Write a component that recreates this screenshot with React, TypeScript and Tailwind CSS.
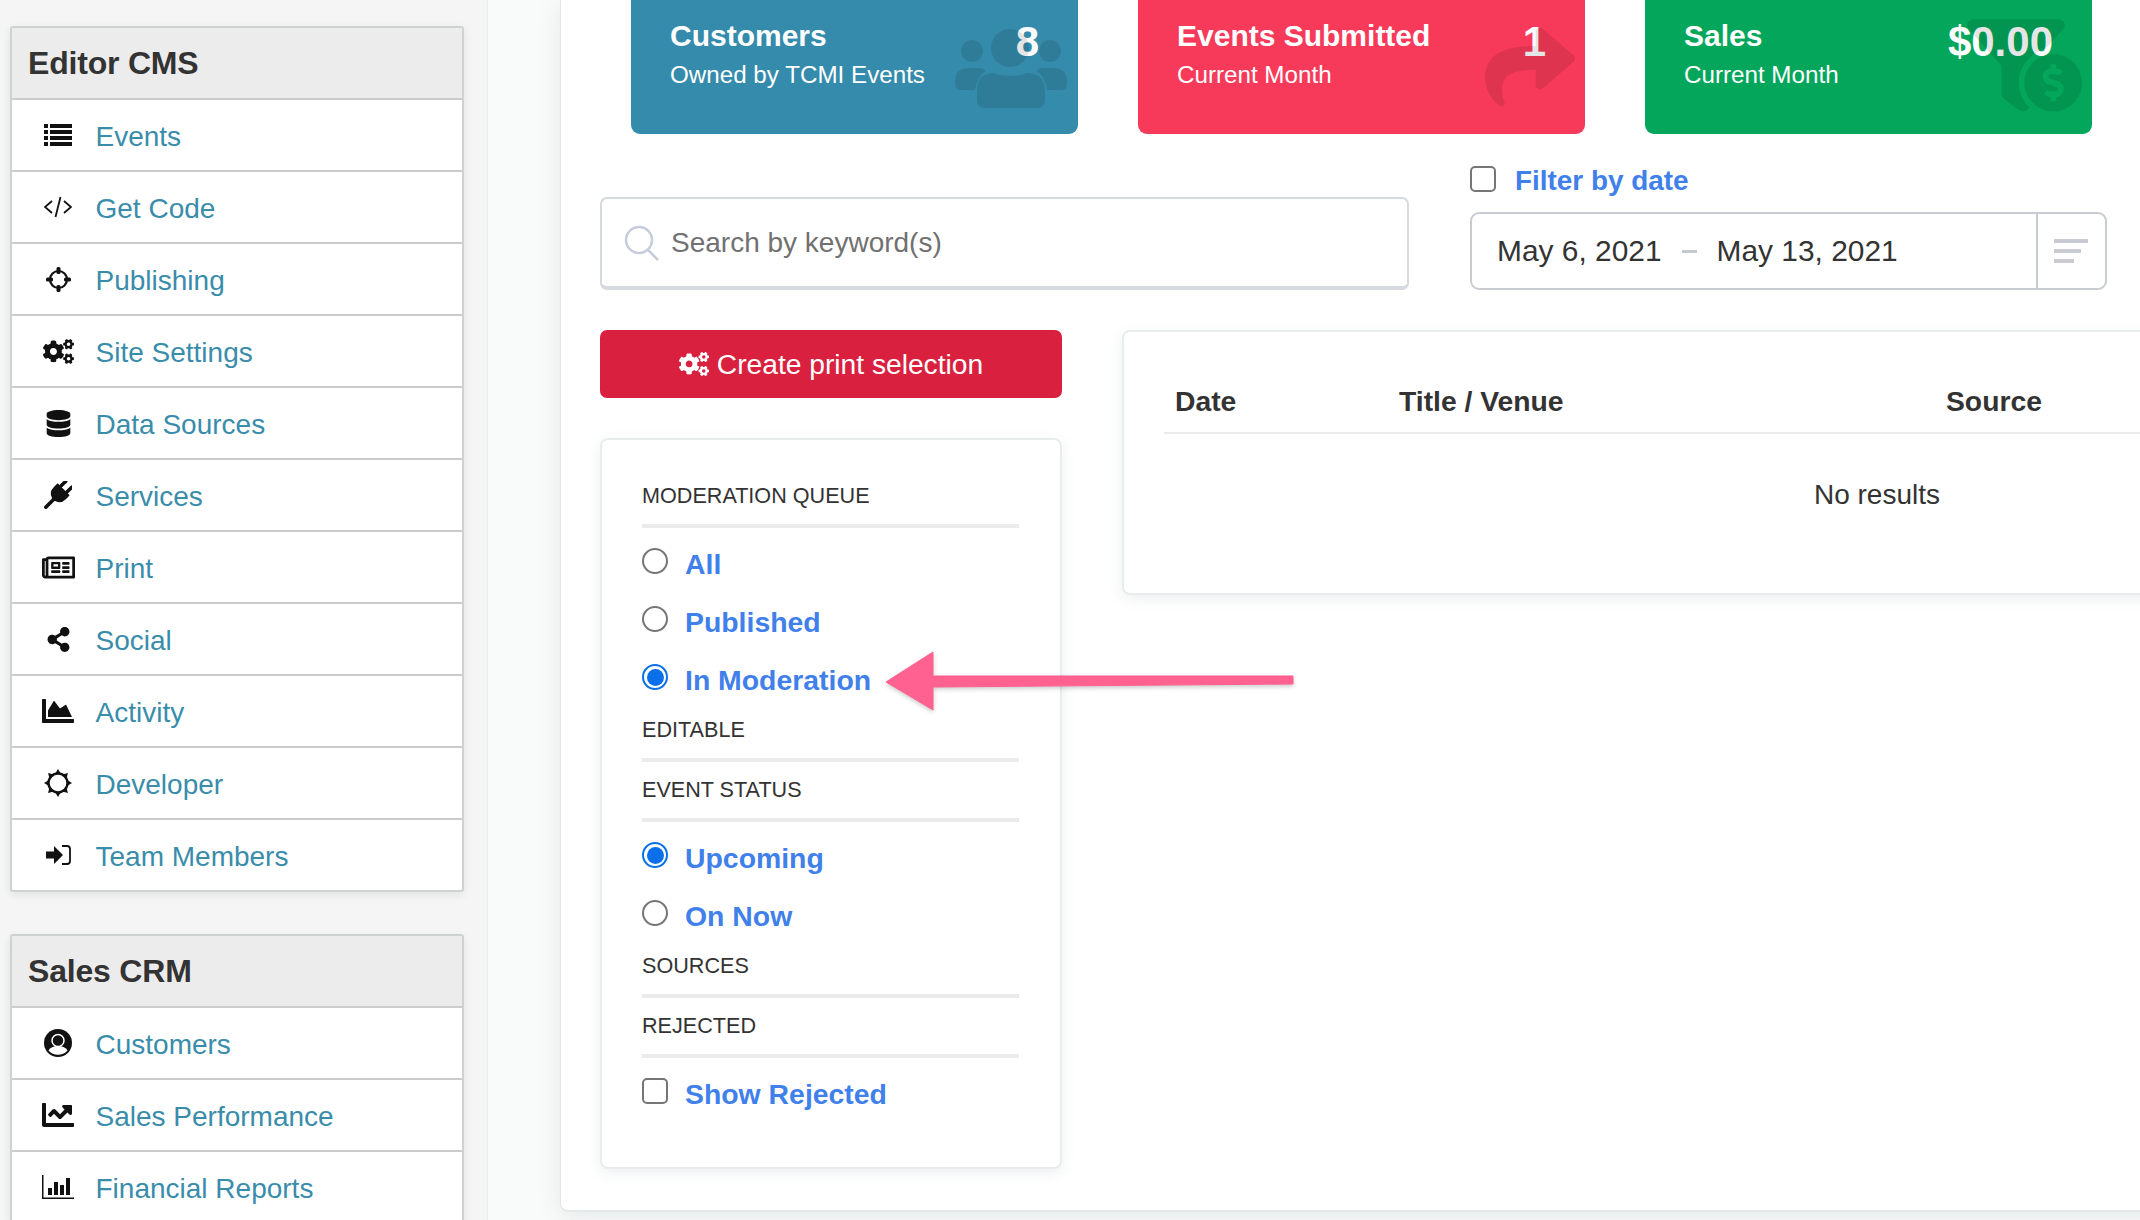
import React from 'react';
import {
  FaCogs,
  FaDatabase,
  FaRegNewspaper,
  FaShareAlt,
  FaChartArea,
  FaChartLine,
  FaShare,
  FaFunnelDollar,
} from 'react-icons/fa';

const ListIcon = () => (
  <svg width="28" height="22" viewBox="0 0 28 22" fill="#111">
    <rect x="0" y="0" width="4" height="4" />
    <rect x="6" y="0" width="22" height="4" />
    <rect x="0" y="6" width="4" height="4" />
    <rect x="6" y="6" width="22" height="4" />
    <rect x="0" y="12" width="4" height="4" />
    <rect x="6" y="12" width="22" height="4" />
    <rect x="0" y="18" width="4" height="4" />
    <rect x="6" y="18" width="22" height="4" />
  </svg>
);

const CodeIcon = () => (
  <svg width="28" height="22" viewBox="0 0 28 22" fill="none" stroke="#111" strokeWidth="1.8">
    <path d="M8 5 L1 11 L8 17" />
    <path d="M20 5 L27 11 L20 17" />
    <path d="M16.5 1 L11.5 21" />
  </svg>
);

const TargetIcon = () => (
  <svg width="25" height="25" viewBox="0 0 25 25" fill="#111">
    <circle cx="12.5" cy="12.5" r="8.500" fill="none" stroke="#111" strokeWidth="2.200" />
    <rect x="10.500" y="0" width="4" height="7" rx="1.500" />
    <rect x="10.500" y="18" width="4" height="7" rx="1.500" />
    <rect x="0" y="10.500" width="7" height="4" rx="1.500" />
    <rect x="18" y="10.500" width="7" height="4" rx="1.500" />
  </svg>
);

const PlugIcon = () => (
  <svg width="28" height="28" viewBox="0 0 28 28" fill="#111">
    <g transform="rotate(45 14 14)">
      <rect x="8" y="-3" width="3.500" height="10" rx="1.700" />
      <rect x="16.500" y="-3" width="3.500" height="10" rx="1.700" />
      <path d="M5.500 6 H22.500 V11 Q22.500 19 15.800 20.500 V21 H12.200 V20.500 Q5.500 19 5.500 11 Z" />
      <rect x="12.200" y="20" width="3.600" height="13" />
    </g>
  </svg>
);

const SunIcon = () => (
  <svg width="28" height="28" viewBox="0 0 28 28" fill="#111">
    <circle cx="14" cy="14" r="9.500" fill="none" stroke="#111" strokeWidth="2.400" />
    {[0, 45, 90, 135, 180, 225, 270, 315].map((a) => (
      <path key={a} d="M14 0 L17 5 H11 Z" transform={`rotate(${a} 14 14)`} />
    ))}
  </svg>
);

const SignInIcon = () => (
  <svg width="25" height="20" viewBox="0 0 25 20" fill="#111">
    <path d="M0 6.5 H8 V1 L17 10 L8 19 V13.500 H0 Z" />
    <path d="M16 1 H21 Q24 1 24 4 V16 Q24 19 21 19 H16" fill="none" stroke="#111" strokeWidth="1.8" />
  </svg>
);

const UserIcon = () => (
  <svg width="28" height="28" viewBox="0 0 28 28">
    <circle cx="14" cy="14" r="14" fill="#111" />
    <path d="M4.500 21.500 Q7 17 14 17 Q21 17 23.500 21.500 Q19.500 25.800 14 25.800 Q8.500 25.800 4.500 21.500 Z" fill="#fff" />
    <circle cx="14" cy="11.500" r="6" fill="#111" stroke="#fff" strokeWidth="1.500" />
  </svg>
);

const BarsIcon = () => (
  <svg width="32" height="24" viewBox="0 0 32 24" fill="#111">
    <path d="M0 0 H1.500 V22.500 H32 V24 H0 Z" />
    <rect x="6" y="13" width="4" height="7" />
    <rect x="12" y="7" width="4" height="13" />
    <rect x="18" y="10" width="4" height="10" />
    <rect x="24" y="3" width="4" height="17" />
  </svg>
);

const UsersGlyph = () => (
  <svg width="112" height="82" viewBox="0 0 112 82" fill="#000" fillOpacity="0.1">
    <circle cx="17" cy="23" r="11" />
    <circle cx="95" cy="23" r="11" />
    <circle cx="55" cy="20" r="19" />
    <path d="M0 53 Q0 40 14 40 H24 Q28 40 31 43 Q22 48 20 62 H6 Q0 62 0 56 Z" />
    <path d="M112 53 Q112 40 98 40 H88 Q84 40 81 43 Q90 48 92 62 H106 Q112 62 112 56 Z" />
    <path d="M22 63 Q22 45 38 45 Q55 51 72 45 Q90 45 90 63 V72 Q90 80 82 80 H30 Q22 80 22 72 Z" />
  </svg>
);

const menus = [
  {
    title: 'Editor CMS',
    items: [
      { label: 'Events', icon: <ListIcon /> },
      { label: 'Get Code', icon: <CodeIcon /> },
      { label: 'Publishing', icon: <TargetIcon /> },
      { label: 'Site Settings', icon: <FaCogs size={31} color="#111" /> },
      { label: 'Data Sources', icon: <FaDatabase size={27} color="#111" /> },
      { label: 'Services', icon: <PlugIcon /> },
      { label: 'Print', icon: <FaRegNewspaper size={33} color="#111" /> },
      { label: 'Social', icon: <FaShareAlt size={25} color="#111" /> },
      { label: 'Activity', icon: <FaChartArea size={32} color="#111" /> },
      { label: 'Developer', icon: <SunIcon /> },
      { label: 'Team Members', icon: <SignInIcon /> },
    ],
  },
  {
    title: 'Sales CRM',
    items: [
      { label: 'Customers', icon: <UserIcon /> },
      { label: 'Sales Performance', icon: <FaChartLine size={32} color="#111" /> },
      { label: 'Financial Reports', icon: <BarsIcon /> },
    ],
  },
];

const SideMenu = ({ title, items }: { title: string; items: { label: string; icon: React.ReactNode }[] }) => (
  <div className="w-[454px] border-2 border-[#cfd2d2] rounded-[3px] bg-white shadow-[0_3px_10px_rgba(0,0,0,0.08)]">
    <div className="h-[70px] pl-[16px] flex items-center bg-[#ececec] text-[32px] font-bold text-[#333] tracking-[-0.2px]">{title}</div>
    {items.map((item) => (
      <div key={item.label} className="h-[72px] border-t-2 border-[#cccccc] flex items-center pl-[28px]">
        <span className="w-[36px] flex justify-center">{item.icon}</span>
        <span className="ml-[19.5px] mt-[4px] text-[28px] text-[#3a8cab]">{item.label}</span>
      </div>
    ))}
  </div>
);

const StatCard = ({ title, sub, value, color, icon }: { title: string; sub: string; value: string; color: string; icon: React.ReactNode }) => (
  <div className={`relative w-[447px] h-[134px] rounded-b-[9px] overflow-hidden pl-[39px] text-white ${color}`}>
    <div className="text-[30px] font-bold leading-[36px] pt-[18px]">{title}</div>
    <div className="text-[24.2px] leading-[30px] mt-[6px]">{sub}</div>
    <div className="absolute top-[18px] right-[39px] text-[42px] font-bold leading-[48px]">{value}</div>
    {icon}
  </div>
);

const Radio = ({ checked }: { checked?: boolean }) =>
  checked ? (
    <span className="w-[26px] h-[26px] rounded-full border-2 border-[#0a6fe8] bg-white flex items-center justify-center -mt-[6px]">
      <span className="w-[17px] h-[17px] rounded-full bg-[#0a6fe8]" />
    </span>
  ) : (
    <span className="w-[26px] h-[26px] rounded-full border-2 border-[#767676] bg-white -mt-[6px]" />
  );

const Check = () => <span className="w-[26px] h-[26px] rounded-[5px] border-2 border-[#767676] bg-white -mt-[6px]" />;

const OptionRow = ({ label, control }: { label: string; control: React.ReactNode }) => (
  <div className="h-[58px] flex items-center">
    {control}
    <span className="ml-[17px] text-[28.4px] font-bold text-[#3f80ea]">{label}</span>
  </div>
);

const SectionHead = ({ children }: { children: React.ReactNode }) => (
  <div className="h-[53px] mb-[7px] border-b-4 border-[#ebebeb] text-[21.6px] leading-[42px] text-[#333]">{children}</div>
);

export default function App() {
  return (
    <div className="relative w-[2140px] h-[1220px] overflow-hidden flex bg-[#f9fbfa] font-['Liberation_Sans',Arial,sans-serif]">
      {/* sidebar */}
      <aside className="w-[488px] shrink-0 h-full bg-[#f5f5f5] border-r border-[#ececec] pl-[10px] pt-[26px] flex flex-col gap-[42px]">
        {menus.map((menu) => (
          <div key={menu.title} className="shrink-0">
            <SideMenu title={menu.title} items={menu.items} />
          </div>
        ))}
      </aside>

      {/* main panel */}
      <main className="ml-[72px] w-[2200px] shrink-0 h-[1212px] bg-white rounded-b-[8px] border-l border-b-2 border-[#e4e8e8] shadow-[0_4px_24px_rgba(80,100,110,0.12)] pl-[39px]">
        <div className="flex gap-[60px] pl-[31px]">
          <StatCard
            title="Customers"
            sub="Owned by TCMI Events"
            value="8"
            color="bg-[#358bab]"
            icon={
              <span className="absolute left-[324px] top-[28px]">
                <UsersGlyph />
              </span>
            }
          />
          <StatCard
            title="Events Submitted"
            sub="Current Month"
            value="1"
            color="bg-[#f83a5a]"
            icon={<FaShare size={90} className="absolute left-[347px] top-[22px] text-black/10" />}
          />
          <StatCard
            title="Sales"
            sub="Current Month"
            value="$0.00"
            color="bg-[#03a65b]"
            icon={<FaFunnelDollar size={115} className="absolute left-[322px] top-[8px] text-black/10" />}
          />
        </div>

        {/* search + date */}
        <div className="mt-[26px] h-[130px] flex items-end">
          <div className="w-[809px] h-[93px] border-2 border-b-4 border-[#d6d9e0] rounded-[7px] flex items-center pl-[22px]">
            <svg width="36" height="36" viewBox="0 0 36 36" fill="none" stroke="#c5cddb" strokeWidth="2.500">
              <circle cx="15" cy="15" r="13" />
              <path d="M24 25 L34 35" />
            </svg>
            <span className="ml-[11px] text-[28px] text-[#717171]">Search by keyword(s)</span>
          </div>
          <div className="ml-[61px] w-[637px]">
            <div className="h-[40px] flex items-center">
              <span className="w-[26px] h-[26px] rounded-[5px] border-2 border-[#767676] -mt-[5px]" />
              <span className="ml-[19px] text-[27.9px] font-bold text-[#3f80ea]">Filter by date</span>
            </div>
            <div className="mt-[11px] h-[78px] border-2 border-[#c9ccd2] rounded-[9px] flex items-center">
              <div className="flex-1 flex items-center pl-[25px] mt-[1px] text-[29.9px] text-[#333]">
                <span>May 6, 2021</span>
                <span className="ml-[20px] w-[15px] h-[3px] bg-[#c5c9cf]" />
                <span className="ml-[20px]">May 13, 2021</span>
              </div>
              <div className="w-[69px] h-full border-l-2 border-[#c9ccd2] flex flex-col justify-center gap-[6px] pl-[16px]">
                <span className="w-[34px] h-[4px] bg-[#c8cbd1]" />
                <span className="w-[27px] h-[4px] bg-[#c8cbd1]" />
                <span className="w-[20px] h-[4px] bg-[#c8cbd1]" />
              </div>
            </div>
          </div>
        </div>

        <div className="mt-[40px] flex items-start">
          {/* left column */}
          <div className="w-[462px] shrink-0">
            <div className="h-[68px] rounded-[7px] bg-[#d9213f] text-white text-[28.2px] flex items-center justify-center gap-[8px]">
              <FaCogs size={30} />
              <span>Create print selection</span>
            </div>
            <div className="mt-[40px] h-[731px] border-2 border-[#e8ecec] rounded-[8px] bg-white pl-[40px] pr-[41px] pt-[35px] shadow-[0_4px_14px_rgba(80,100,110,0.1)]">
              <SectionHead>MODERATION QUEUE</SectionHead>
              <OptionRow label="All" control={<Radio />} />
              <OptionRow label="Published" control={<Radio />} />
              <OptionRow label="In Moderation" control={<Radio checked />} />
              <SectionHead>EDITABLE</SectionHead>
              <SectionHead>EVENT STATUS</SectionHead>
              <OptionRow label="Upcoming" control={<Radio checked />} />
              <OptionRow label="On Now" control={<Radio />} />
              <SectionHead>SOURCES</SectionHead>
              <SectionHead>REJECTED</SectionHead>
              <OptionRow label="Show Rejected" control={<Check />} />
            </div>
          </div>

          {/* results table */}
          <div className="ml-[60px] w-[1510px] shrink-0 h-[265px] border-2 border-[#e8ecec] rounded-[8px] bg-white px-[40px] pt-[39px] shadow-[0_4px_14px_rgba(80,100,110,0.1)]">
            <div className="h-[63px] border-b-2 border-[#ebebeb] grid grid-cols-[224px_547px_1fr] items-center pl-[11px] text-[28.3px] font-bold text-[#333]">
              <span>Date</span>
              <span>Title / Venue</span>
              <span>Source</span>
            </div>
            <div className="h-[122px] flex items-center justify-center text-[28px] text-[#333]">No results</div>
          </div>
        </div>
      </main>

      {/* annotation arrow */}
      <svg className="absolute left-[880px] top-[645px]" width="420" height="75" viewBox="0 0 420 75">
        <path d="M6 37 L53 7 L53 31 L413 31 L413 39 L53 42 L53 65 Z" fill="#ff6190" stroke="#ff6190" strokeWidth="1" style={{ filter: 'drop-shadow(0 2px 2px rgba(0,0,0,0.2))' }} />
      </svg>
    </div>
  );
}
